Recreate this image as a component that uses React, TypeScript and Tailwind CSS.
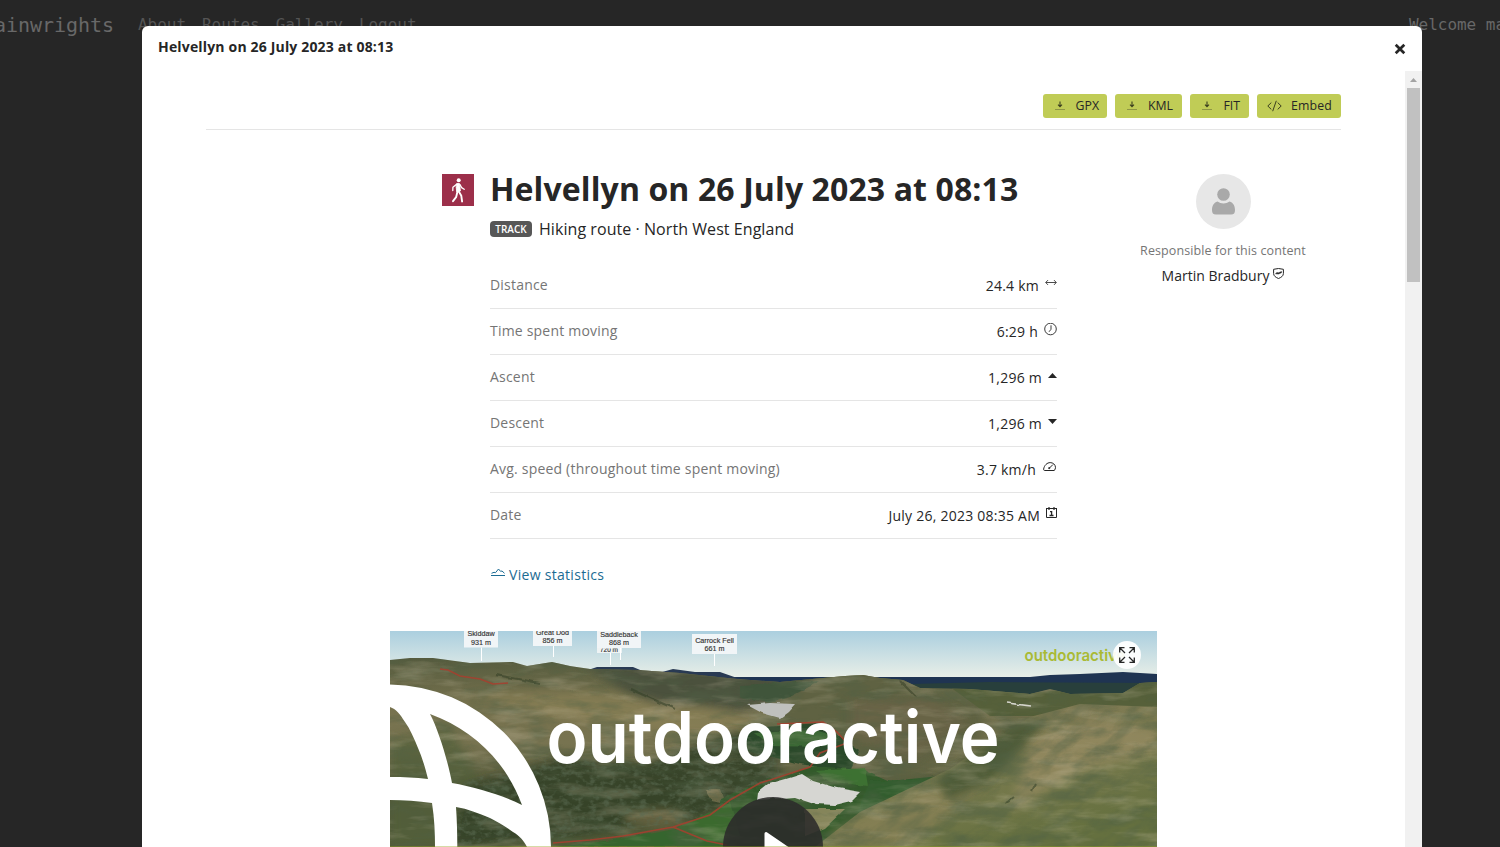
import type { ReactNode } from 'react';

const ink = '#262626';

function Download() {
  return (
    <svg width="10" height="10" viewBox="0 0 10 10" fill="none">
      <path d="M5 .5v5M3 3.7l2 2 2-2" stroke="#3b3f1f" strokeWidth="1.1" />
      <path d="M0 8.5h10" stroke="#8e9645" strokeWidth="1" />
    </svg>
  );
}

function Code() {
  return (
    <svg width="15" height="12" viewBox="0 0 15 12" fill="none" stroke="#3b3f1f" strokeWidth="1">
      <path d="M4.3 2.6.8 6l3.5 3.4M10.7 2.6 14.2 6l-3.5 3.4M9.3.8 5.7 11.2" />
    </svg>
  );
}

function ToolButton({ width, icon, label }: { width: string; icon: ReactNode; label: string }) {
  return (
    <button className={`flex h-6 items-center justify-between rounded-[3px] bg-[#c0cc56] text-[12.3px] leading-none ${width}`}>
      <span>{icon}</span>
      <span className="pt-px">{label}</span>
    </button>
  );
}

function Hiker() {
  return (
    <svg width="32" height="32" viewBox="0 0 32 32" fill="none" stroke="#fff" strokeLinecap="round" strokeLinejoin="round">
      <circle cx="16.7" cy="6.3" r="2" fill="#fff" stroke="none" />
      <path d="M14.9 9.600h2.600l.9 7.400-3.700.8-.5-4.600Z" fill="#fff" strokeWidth=".9" />
      <path d="m14.300 10.400-3.400 2.900-.1 3.300M18 10.600l1.600 3 2.600 1.700" strokeWidth="1.300" />
      <path d="m15.500 17.600-1.400 5.600-3.100 4M16.900 17.600l2.400 4.200.8 5.700" strokeWidth="1.900" />
    </svg>
  );
}

const DistanceIcon = (
  <svg width="12" height="8" viewBox="0 0 12 8" fill="none" stroke="#4a4a4a">
    <path d="M.8 3.500h10.400M3 1.100.7 3.500 3 5.900M9 1.100l2.300 2.400L9 5.900" />
  </svg>
);
const ClockIcon = (
  <svg width="13" height="13" viewBox="0 0 13 13" fill="none" stroke={ink} strokeWidth=".9">
    <circle cx="6.500" cy="6" r="5.800" />
    <path d="M7 2.300v4L5 8.800" />
  </svg>
);
const UpIcon = (
  <svg width="9" height="5" viewBox="0 0 9 5"><path d="M4.500 0 9 5H0Z" fill={ink} /></svg>
);
const DownIcon = (
  <svg width="9" height="5" viewBox="0 0 9 5"><path d="M0 0h9L4.500 5Z" fill={ink} /></svg>
);
const SpeedIcon = (
  <svg width="13" height="9" viewBox="0 0 13 9" fill="none" stroke={ink}>
    <path d="M1.700 8.500h9.600c.8-1 1.200-2 1.200-3.200C12.300 2.500 10 .6 7.200.6 4.200.6 1.200 3.200.6 7.300c0 .7.400 1.200 1.100 1.200ZM6.300 6.200l3.600-3.600" />
    <circle cx="6.200" cy="6.100" r=".6" fill={ink} />
  </svg>
);
const CalendarIcon = (
  <svg width="11" height="11" viewBox="0 0 11 11" fill="none" stroke={ink}>
    <path d="M.5 1.500v9h10v-9M0 1.500h11" />
    <path d="M3 0v3M8 0v3" strokeWidth="1.200" />
    <path d="M4 4.700h1.600v3.800M3.500 8.500h4" strokeWidth="1.300" />
  </svg>
);

const stats: { label: string; value: string; icon: ReactNode; gap: string; lift: string }[] = [
  { label: 'Distance', value: '24.4 km', icon: DistanceIcon, gap: 'gap-1.5', lift: 'pb-[5px]' },
  { label: 'Time spent moving', value: '6:29 h', icon: ClockIcon, gap: 'gap-1.5', lift: 'pb-[5px]' },
  { label: 'Ascent', value: '1,296 m', icon: UpIcon, gap: 'gap-1.5', lift: 'pb-[5px]' },
  { label: 'Descent', value: '1,296 m', icon: DownIcon, gap: 'gap-1.5', lift: 'pb-[5px]' },
  { label: 'Avg. speed (throughout time spent moving)', value: '3.7 km/h', icon: SpeedIcon, gap: 'gap-[7px]', lift: 'pb-[6px] pr-px' },
  { label: 'Date', value: 'July 26, 2023 08:35 AM', icon: CalendarIcon, gap: 'gap-1.5', lift: 'pb-[6px]' },
];

const peaks = [
  { name: 'Skiddaw', h: '931 m', x: 74, y: -3, w: 34, b: 16.500, stem: 91.500, to: 30 },
  { name: 'Great Dod', h: '856 m', x: 143, y: -4, w: 39, b: 15, stem: 163.500, to: 26 },
  { name: 'Saddleback', h: '868 m', x: 207, y: -2, w: 44, b: 17, stem: 230.500, to: 29 },
  { name: 'Carrock Fell', h: '661 m', x: 302, y: 3, w: 45, b: 23, stem: 324.500, to: 35 },
];

function Terrain() {
  return (
    <svg className="block" width="767" height="216" viewBox="0 0 767 216">
      <defs>
        <linearGradient id="sky" x1="0" y1="0" x2="0" y2="1">
          <stop offset="0" stopColor="#abcfdf" />
          <stop offset="1" stopColor="#edf1e8" />
        </linearGradient>
        <linearGradient id="left" x1="0" y1="0" x2="0" y2="1">
          <stop offset=".12" stopColor="#555b3e" />
          <stop offset=".35" stopColor="#77724e" />
          <stop offset=".52" stopColor="#777350" />
          <stop offset=".75" stopColor="#505638" />
          <stop offset="1" stopColor="#535c39" />
        </linearGradient>
        <linearGradient id="right" x1="0" y1="0" x2=".55" y2="1">
          <stop offset="0" stopColor="#56633c" />
          <stop offset=".35" stopColor="#807b54" />
          <stop offset=".65" stopColor="#76794c" />
          <stop offset="1" stopColor="#65703f" />
        </linearGradient>
        <filter id="soft" x="-20%" y="-30%" width="140%" height="160%"><feGaussianBlur stdDeviation="5" /></filter>
        <filter id="edge" x="-5%" y="-5%" width="110%" height="110%">
          <feTurbulence type="fractalNoise" baseFrequency=".08" numOctaves="2" seed="5" />
          <feDisplacementMap in="SourceGraphic" scale="4" xChannelSelector="R" yChannelSelector="G" />
          <feGaussianBlur stdDeviation=".5" />
        </filter>
        <filter id="dark" x="0" y="0" width="100%" height="100%">
          <feTurbulence type="fractalNoise" baseFrequency=".025 .07" numOctaves="5" seed="8" />
          <feColorMatrix values="0 0 0 0 .08  0 0 0 0 .12  0 0 0 0 .06  3.2 0 0 0 -1.45" />
        </filter>
        <filter id="grain" x="0" y="0" width="100%" height="100%">
          <feTurbulence type="fractalNoise" baseFrequency=".14 .2" numOctaves="3" seed="21" />
          <feColorMatrix values="0 0 0 0 .1  0 0 0 0 .14  0 0 0 0 .08  0 3.500 0 0 -1.600" />
        </filter>
        <filter id="light" x="0" y="0" width="100%" height="100%">
          <feTurbulence type="fractalNoise" baseFrequency=".02 .09" numOctaves="4" seed="3" />
          <feColorMatrix values="0 0 0 0 .68  0 0 0 0 .6  0 0 0 0 .44  0 0 2.800 0 -1.350" />
        </filter>
        <clipPath id="land"><path d="M0 29 20 27 43 27 80 32 123 31 137 35 162 31 180 35 200 38 248 39 290 42 347 48 390 51 433 47 455 45 473 44 490 47 513 49 530 57 580 58 640 63 660 58 680 63 733 62 750 52 767 51V216H0Z" /></clipPath>
        <clipPath id="slope"><path d="M425 216 470 181 560 138 590 117 640 86 690 73 767 76V216Z" /></clipPath>
        <clipPath id="wood"><path d="M75 150 170 124 255 132 340 105 385 108 390 150 340 169 300 190 190 205 70 216 60 180Z" /></clipPath>
      </defs>

      <rect width="767" height="50" fill="url(#sky)" />
      <path d="M330 46H640L660 44 690 43 733 41 767 43V70H330Z" fill="#1f3452" />
      <path d="M480 54 600 51 767 52V70H480Z" fill="#283f3c" />
      <path d="M195 40 207 36 243 36 255 41ZM265 43 283 38 305 41 330 41 350 48V55H265Z" fill="#293a53" />
      <g clipPath="url(#land)">
        <rect width="767" height="216" fill="url(#left)" />
        <path d="M190 30 300 38 440 40V66L390 72 350 80 310 74 270 76 235 60Z" fill="#4b513c" filter="url(#soft)" />
        <path d="M390 62 433 40 473 36 513 42 540 60 600 70 590 110 500 150 430 104 395 94 385 78Z" fill="#5f6243" filter="url(#soft)" />
        <path d="M350 54 430 50 400 66 380 72 350 66Z" fill="#40553a" filter="url(#edge)" />
        <path d="M460 70 540 66 580 90 520 130 460 105Z" fill="#6d654a" opacity=".7" filter="url(#soft)" />
        <path d="M560 56 640 62 767 50V85H600Z" fill="#56603a" />
        <path d="M80 62 200 60 330 80 390 100 300 104 170 88Z" fill="#96895c" opacity=".45" filter="url(#soft)" />
        <path d="M0 110 60 95 90 150 60 216H0Z" fill="#53603a" opacity=".7" filter="url(#soft)" />
        <path d="M75 155 170 126 255 132 340 100 390 105 390 150 340 172 300 190 190 205 60 216Z" fill="#323f28" opacity=".85" filter="url(#soft)" />
        <ellipse cx="265" cy="187" rx="32" ry="9" fill="#85764f" opacity=".6" filter="url(#soft)" />
        <path d="M315 158 330 158 335 173 322 170Z" fill="#857a54" opacity=".7" filter="url(#edge)" />
        <g filter="url(#edge)">
          <path d="M360 97 430 92 470 120 460 140 410 133 350 118Z" fill="#2b4a2b" />
          <path d="M364 102 425 99 448 106 435 116 380 115Z" fill="#3a6734" />
          <path d="M330 168 372 150 425 135 475 139 500 150 550 145 555 155 480 190 450 216H330Z" fill="#305a2c" />
          <path d="M425 140 475 137 478 155 440 151Z" fill="#3e7130" />
          <path d="M480 150 540 148 500 175 465 182Z" fill="#315d2d" />
          <path d="M415 178 455 178 435 197 415 205Z" fill="#85855a" />
          <path d="M165 216 230 208 285 198 320 200 350 216Z" fill="#36652d" />
          <path d="M285 197 340 172 350 205 315 210Z" fill="#3a6a2f" />
        </g>
        <path d="M425 216 470 181 560 138 590 117 640 86 690 73 767 76V216Z" fill="url(#right)" />
        <path d="M640 110 700 90 767 98V120L690 140 620 180Z" fill="#a3926a" opacity=".55" filter="url(#soft)" />
        <path d="M440 200 540 158 600 150 520 216H440Z" fill="#94865d" opacity=".5" filter="url(#soft)" />
        <path d="M545 150 625 90 655 92 600 150 560 170Z" fill="#394b29" opacity=".65" filter="url(#soft)" />
        <rect width="767" height="216" filter="url(#dark)" opacity=".45" />
        <rect width="767" height="216" filter="url(#light)" opacity=".25" />
        <g clipPath="url(#wood)"><rect width="500" height="216" filter="url(#grain)" opacity=".6" /></g>
        <g clipPath="url(#slope)" opacity=".35">
          <g transform="rotate(-38 600 140)"><rect x="350" y="-100" width="560" height="480" filter="url(#dark)" /></g>
        </g>
        <g fill="none" stroke="#2d3b22" opacity=".5" filter="url(#edge)">
          <path d="M105 44 150 52M240 58 285 78M642 160l4-8M616 172l8-6M510 50l16 16" strokeWidth="2" />
        </g>
      </g>

      <g filter="url(#edge)">
        <path d="M357 74 380 72 405 73 398 81 390 87 372 82Z" fill="#bfc0bd" />
        <path d="M367 169 368 161 378 153 396 148 412 143 423 150 447 157 471 161 462 170 445 174 426 173 405 166Z" fill="#d6d6d2" />
        <path d="m617 72 24 3" stroke="#d5d5cc" strokeWidth="1.500" />
      </g>
      <g fill="none" stroke="#a83e2e" strokeWidth="1.600" opacity=".85">
        <path d="m50 38 8 1 12 6 20 3 13 5 15-1M163 212l37-3 33-4 50-9 37-12 20-15 30-17 10-3 40-13 10-14 27-10-10-11-14-10-46 2M283 196l34 14 20 4" />
      </g>

      <g fontFamily="Liberation Sans, sans-serif" fontSize="7.200" fill="#333" stroke="#333" strokeWidth=".15" textAnchor="middle">
        <path d="M220.500 17v17" stroke="#fff" strokeWidth="1" />
        <rect x="207" y="14" width="25" height="8" fill="#eef3f4" stroke="none" />
        <text x="219" y="20.500" fontSize="6.500">720 m</text>
        <rect x="208" y="15" width="24" height="2.500" fill="#eef3f4" stroke="none" />
        {peaks.map((p) => (
          <g key={p.name}>
            <path d={`M${p.stem} ${p.b}V${p.to}`} stroke="#fff" strokeWidth="1" />
            <rect x={p.x} y={p.y} width={p.w} height={p.b - p.y} fill="#f1f5f7" stroke="none" />
            <text x={p.x + p.w / 2} y={p.b - 11.300}>{p.name}</text>
            <text x={p.x + p.w / 2} y={p.b - 2.700}>{p.h}</text>
          </g>
        ))}
      </g>

      <g fill="#fff">
        <path fillRule="evenodd" d="M0 53.500A162.500 162.500 0 0 1 161 216H137C134 210 130 205 123 201 115 195 108 191 100 187 88 182 78 178 66 176 67 190 67.300 203 67.300 216H45C45 202 44.500 188 42 172 28 170 14 169 0 169V146C14 146 25 146.500 38 148 34 132 31 124 28 117 24 107 20 98 15 91 10 83 6 78 0 76Z M40 83C48 98 58 130 62 152 85 156 112 164 132 174 116 131 84 99 40 83Z" />
        <text x="156.500" y="131.500" fontFamily="Inter, sans-serif" fontWeight="600" fontSize="72" textLength="453" lengthAdjust="spacingAndGlyphs">outdooractive</text>
      </g>
      <text x="634.500" y="29.500" fontFamily="Inter, sans-serif" fontWeight="600" fontSize="16" fill="#a9ba35" textLength="101" lengthAdjust="spacingAndGlyphs">outdooractive</text>
      <circle cx="737" cy="24" r="14" fill="#fff" opacity=".93" />
      <g fill="none" stroke={ink} strokeWidth="1.300">
        <path d="m735 22-5-5M739 22l5-5M735 26l-5 5M739 26l5 5M729.700 21.500v-4.800h4.800M739.500 16.700h4.800v4.800M744.300 26.500v4.800h-4.800M734.500 31.300h-4.800v-4.800" />
      </g>
      <circle cx="383" cy="216" r="50" fill="#2c2a2a" opacity=".87" />
      <path d="M376 202.500 398 217.500H376Z" fill="#fff" stroke="#fff" strokeWidth="3" strokeLinejoin="round" />
      <path d="M0 215.700h767" stroke="#9aa31e" strokeWidth=".7" opacity=".7" />
    </svg>
  );
}

export default function App() {
  return (
    <div className="relative h-[847px] w-full overflow-hidden bg-[#262626] font-['Open_Sans',sans-serif] text-[#262626]">
      <nav className="flex h-[50px] items-center justify-between overflow-hidden whitespace-nowrap font-['DejaVu_Sans_Mono',monospace] text-[#686868]">
        <div className="-ml-[6px] flex items-center">
          <span className="w-36 text-xl tracking-[-0.03px]">ainwrights</span>
          <div className="flex gap-4 text-base tracking-[-0.03px] text-[#545454]">
            <span>About</span><span>Routes</span><span>Gallery</span><span>Logout</span>
          </div>
        </div>
        <span className="w-[91px] text-base tracking-[-0.03px]">Welcome ma</span>
      </nav>

      <section className="absolute left-[142px] top-[26px] flex h-[821px] w-[1280px] flex-col overflow-hidden rounded-t-md bg-white">
        <header className="flex h-[45px] shrink-0 justify-between pl-4 pr-4">
          <h2 className="pt-[11px] text-sm font-bold leading-5 tracking-[0.17px]">Helvellyn on 26 July 2023 at 08:13</h2>
          <svg className="mt-[17px]" width="12" height="12" viewBox="0 0 12 12"><path d="m1.700 1.700 8.600 8.600m0-8.600-8.600 8.600" stroke={ink} strokeWidth="2.700" /></svg>
        </header>

        <div className="flex min-h-0 flex-1">
          <div className="flex flex-1 flex-col overflow-hidden">
            <div className="mx-16 flex justify-end gap-2 border-b border-[#e5e5e5] pb-[11px] pt-[23px]">
              <ToolButton width="w-16 pl-3 pr-2" icon={<Download />} label="GPX" />
              <ToolButton width="w-[67px] pl-3 pr-[9px]" icon={<Download />} label="KML" />
              <ToolButton width="w-[59px] pl-3 pr-[9px]" icon={<Download />} label="FIT" />
              <ToolButton width="w-[84px] pl-2.5 pr-[9px] tracking-[0.15px]" icon={<Code />} label="Embed" />
            </div>

            <div className="flex pl-[300px] pt-11">
              <div className="mr-4 size-8 bg-[#9c2f4a]"><Hiker /></div>
              <div className="w-[567px]">
                <h1 className="-mt-px h-11 whitespace-nowrap text-[32px] font-bold leading-8 tracking-[0.11px]">Helvellyn on 26 July 2023 at 08:13</h1>
                <div className="flex h-6 items-center">
                  <span className="mr-[7px] flex h-4 w-[42px] items-center justify-center rounded-sm bg-[#575757] text-[10px] font-semibold leading-none text-white">TRACK</span>
                  <span className="text-base leading-6 tracking-[0.06px]">Hiking route · North West England</span>
                </div>
                <dl className="mt-[22px]">
                  {stats.map((s) => (
                    <div key={s.label} className="flex h-[46px] items-center justify-between border-b border-[#e5e5e5] text-sm">
                      <dt className="pb-0.5 tracking-[0.2px] text-[#757575]">{s.label}</dt>
                      <dd className={`flex items-center tracking-[0.24px] ${s.gap}`}>{s.value}<span className={s.lift}>{s.icon}</span></dd>
                    </div>
                  ))}
                </dl>
                <a className="mt-[26px] flex h-5 items-center gap-1 text-sm tracking-[0.3px] text-[#1b6b93]">
                  <svg className="mb-[5px] ml-px" width="14" height="9" viewBox="0 0 14 9" fill="none" stroke="currentColor" strokeWidth="1"><path d="M0 7.500h14M.5 5.300 3 4.300l1.500.4L7.500 1l2 2.300 1.500-.3 2.500 2.300" /></svg>
                  View statistics
                </a>
              </div>
              <aside className="ml-12 flex w-[236px] flex-col items-center">
                <div className="flex size-[55px] items-center justify-center rounded-full bg-[#e7e7e7]">
                  <svg width="23" height="27" viewBox="0 0 23 27" fill="#a9a9a9"><circle cx="11.500" cy="6.500" r="6.300" /><path d="M5.500 13.500C9 16 14 16 17.500 13.500c4 1 5.500 5 5.500 8.500 0 3-1 4.500-4 4.500H4c-3 0-4-1.500-4-4.500 0-3.500 1.500-7.500 5.500-8.500Z" /></svg>
                </div>
                <span className="mt-3 text-[12.500px] leading-5 tracking-[0.1px] text-[#757575]">Responsible for this content</span>
                <span className="mt-[5px] flex items-center gap-1 text-sm leading-5">
                  Martin Bradbury
                  <svg className="mb-[5px]" width="11" height="11" viewBox="0 0 11 11" fill="none" stroke={ink}><path d="M.6 1.300 5.500.5l4.900.8v4.200c0 2.500-2.300 4-4.900 5C2.900 9.500.6 8 .6 5.500Z" /><path d="m2.500 5.800 1.200-1.200 1.800.2 3-1.300v1.200l-3 1.300Z" fill={ink} strokeWidth=".5" /></svg>
                </span>
              </aside>
            </div>

            <div className="ml-[248px] mt-[46px] h-[216px] w-[767px] shrink-0"><Terrain /></div>
          </div>

          <div className="flex w-[17px] flex-col items-center bg-[#f1f1f1]">
            <div className="flex h-[17px] items-center"><svg width="7" height="4" viewBox="0 0 7 4"><path d="M3.500 0 7 4H0Z" fill="#a3a3a3" /></svg></div>
            <div className="h-[194px] w-[13px] bg-[#c1c1c1]" />
          </div>
        </div>
      </section>
    </div>
  );
}
